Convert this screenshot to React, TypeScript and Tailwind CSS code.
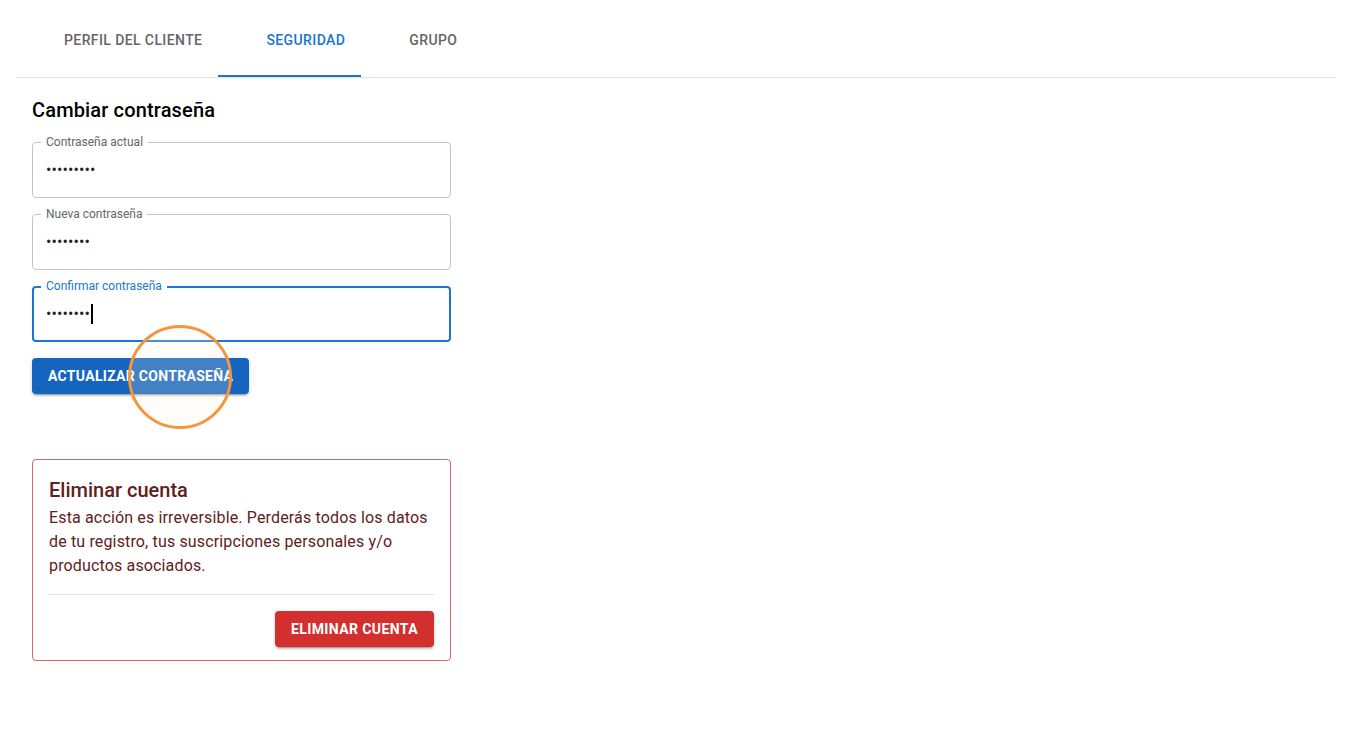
const tabs = ["Perfil del cliente", "Seguridad", "Grupo"];

function PasswordField({
  label,
  dots,
  focused = false,
}: {
  label: string;
  dots: number;
  focused?: boolean;
}) {
  return (
    <div
      className={
        focused
          ? "relative h-[56px] rounded border-2 border-[#1976d2] px-[12px] flex items-center"
          : "relative h-[56px] rounded border border-[#c4c4c4] px-[13px] flex items-center"
      }
    >
      <span
        className={
          focused
            ? "absolute -top-[10px] left-[7px] bg-white px-[5px] text-xs leading-4 text-[#1976d2]"
            : "absolute -top-[9px] left-[8px] bg-white px-[5px] text-xs leading-4 text-[#666]"
        }
      >
        {label}
      </span>
      <span className="text-base leading-6 text-[#222] tracking-[0.1px]">
        {"•".repeat(dots)}
      </span>
      {focused && <span className="ml-px h-[20px] w-[2px] bg-black" />}
    </div>
  );
}

export default function App() {
  return (
    <div className="relative min-h-screen bg-white font-['Roboto','Liberation_Sans',sans-serif] text-black">
      {/* pestañas */}
      <div className="relative mx-4 flex border-b border-[#e0e0e0] pl-4">
        {tabs.map((t, i) => (
          <button
            key={t}
            type="button"
            className={
              i === 1
                ? "px-8 pt-[28px] pb-[25px] text-sm leading-6 font-medium uppercase tracking-[0.4px] text-[#1976d2]"
                : "px-8 pt-[28px] pb-[25px] text-sm leading-6 font-medium uppercase tracking-[0.4px] text-[#666]"
            }
          >
            {t}
          </button>
        ))}
        <div className="absolute bottom-0 left-[202px] h-[2px] w-[143px] bg-[#1976d2]" />
      </div>

      <div className="px-8">
        {/* cambiar contraseña */}
        <h2 className="mt-4 text-xl leading-8 font-medium tracking-[0.15px]">Cambiar contraseña</h2>
        <div className="mt-4 flex w-[419px] flex-col gap-4">
          <PasswordField label="Contraseña actual" dots={9} />
          <PasswordField label="Nueva contraseña" dots={8} />
          <PasswordField label="Confirmar contraseña" dots={8} focused />
        </div>
        <button
          type="button"
          className="mt-4 h-9 rounded bg-[#1565c0] px-4 text-sm font-bold uppercase tracking-[0.3px] text-white shadow-[0_3px_1px_-2px_rgba(0,0,0,0.2),0_2px_2px_0_rgba(0,0,0,0.14),0_1px_5px_0_rgba(0,0,0,0.12)]"
        >
          Actualizar contraseña
        </button>

        {/* eliminar cuenta */}
        <div className="mt-[65px] w-[419px] rounded border border-[#d06a66] px-4 pt-4 pb-[13px] text-[#5f2120]">
          <h3 className="text-xl leading-7 font-medium">Eliminar cuenta</h3>
          <p className="mt-0.5 text-base leading-6 tracking-[0.15px]">
            Esta acción es irreversible. Perderás todos los datos de tu registro, tus
            suscripciones personales y/o productos asociados.
          </p>
          <div className="mt-4 border-t border-[#e0e0e0]" />
          <div className="mt-4 flex justify-end">
            <button
              type="button"
              className="h-9 rounded bg-[#d32f2f] px-4 text-sm font-bold uppercase tracking-[0.4px] text-white shadow-[0_3px_1px_-2px_rgba(0,0,0,0.2),0_2px_2px_0_rgba(0,0,0,0.14),0_1px_5px_0_rgba(0,0,0,0.12)]"
            >
              Eliminar cuenta
            </button>
          </div>
        </div>
      </div>

      {/* marcador de clic */}
      <div className="pointer-events-none absolute left-[128px] top-[325px] h-[104px] w-[104px] rounded-full border-[3px] border-[#f7953a] bg-[#fff3e6]/20" />
    </div>
  );
}
